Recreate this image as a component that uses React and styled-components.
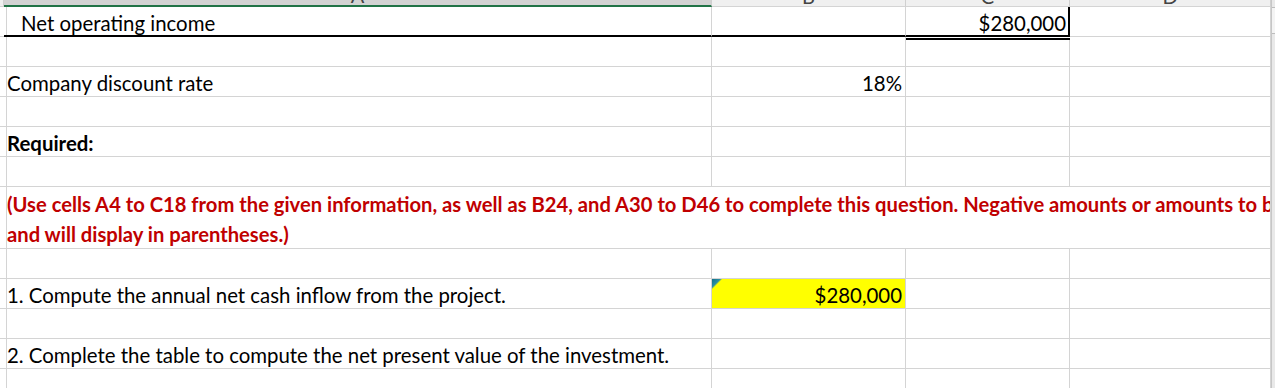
import styled, { createGlobalStyle } from "styled-components";

const GlobalStyle = createGlobalStyle`
  html, body {
    margin: 0;
    padding: 0;
    background: #fff;
    overflow: hidden;
  }
  body {
    font-family: Lato, "Liberation Sans", sans-serif;
    color: #000;
  }
`;

const COLS = "4px 708px 194px 164px 201px";
const GRID = "#d4d4d4";

const Page = styled.div`
  display: flex;
  width: 1275px;
  height: 388px;
  overflow: hidden;
`;

const Sheet = styled.div`
  width: 1271px;
  display: flex;
  flex-direction: column;
`;

const ScrollStrip = styled.div`
  width: 4px;
  background: #e9e9e9;
  border-left: 1px solid #c6c6c6;
  box-sizing: border-box;
  padding-top: 7px;
`;

const ScrollThumb = styled.div`
  height: 25px;
  border-top: 1px solid #bdbdbd;
  border-bottom: 1px solid #bdbdbd;
  background: #f4f4f4;
`;

const HeaderRow = styled.div`
  display: grid;
  grid-template-columns: ${COLS};
  height: 7px;
  flex-shrink: 0;
`;

const HeaderCell = styled.div`
  box-sizing: border-box;
  display: flex;
  justify-content: center;
  align-items: flex-end;
  overflow: hidden;
  background: ${(p) => (p.$active ? "#d3d3d3" : "#f0f0f0")};
  border-right: 1px solid #d0d0d0;
  border-bottom: ${(p) => (p.$active ? "2px solid #217346" : `1px solid ${GRID}`)};
  font-size: 20px;
  line-height: 1;
  color: #444;
`;

const Row = styled.div`
  display: grid;
  grid-template-columns: ${COLS};
  height: ${(p) => p.$h || 30}px;
  flex-shrink: 0;
`;

const Cell = styled.div`
  box-sizing: border-box;
  position: relative;
  display: flex;
  align-items: flex-end;
  justify-content: ${(p) => (p.$right ? "flex-end" : "flex-start")};
  padding: 0 3px 3px ${(p) => p.$indent || 3}px;
  border-right: 1px solid ${GRID};
  border-bottom: 1px solid ${GRID};
  font-size: 20.4px;
  line-height: 1;
  white-space: nowrap;
  font-weight: ${(p) => (p.$bold ? 700 : 400)};
`;

const TotalCell = styled(Cell)`
  border-bottom: 2px solid #000;
  padding-bottom: 2px;
`;

const DoubleTotalCell = styled(TotalCell)`
  z-index: 1;
  padding-right: 2px;
  border-right: 2px solid #000;
  box-shadow: 0 1px 0 #fff, 0 3px 0 #000;
`;

const InputCell = styled(Cell)`
  background: linear-gradient(135deg, #12708a 0, #2c8fa3 6px, #ffff00 7.5px);
`;

const NoteCell = styled.div`
  grid-column: 2 / 6;
  box-sizing: border-box;
  overflow: hidden;
  padding: 2px 0 0 3px;
  border-right: 1px solid ${GRID};
  border-bottom: 1px solid ${GRID};
  color: #c00000;
  font-weight: 700;
  font-size: 20.2px;
  line-height: 30px;
  white-space: nowrap;
`;

const Empty = () => (
  <>
    <Cell />
    <Cell />
    <Cell />
    <Cell />
    <Cell />
  </>
);

const TextRow = ({ text, value, fill, bold }) => (
  <Row>
    <Cell />
    <Cell $bold={bold}>{text}</Cell>
    {fill ? <InputCell $right>{value}</InputCell> : <Cell $right>{value}</Cell>}
    <Cell />
    <Cell />
  </Row>
);

export default function App() {
  return (
    <>
      <GlobalStyle />
      <Page>
        <Sheet>
          <HeaderRow>
            <HeaderCell />
            <HeaderCell $active>A</HeaderCell>
            <HeaderCell>B</HeaderCell>
            <HeaderCell>C</HeaderCell>
            <HeaderCell>D</HeaderCell>
          </HeaderRow>

          <Row>
            <Cell />
            <TotalCell $indent={17}>Net operating income</TotalCell>
            <TotalCell />
            <DoubleTotalCell $right>$280,000</DoubleTotalCell>
            <Cell />
          </Row>
          <Row><Empty /></Row>
          <TextRow text="Company discount rate" value="18%" />
          <Row><Empty /></Row>
          <TextRow text="Required:" bold />
          <Row><Empty /></Row>

          <Row $h={62}>
            <Cell />
            <NoteCell>
              <div>
                (Use cells A4 to C18 from the given information, as well as B24, and A30 to D46 to complete this question. Negative amounts or amounts to be deducted should be indicated with a minus sign
              </div>
              <div>and will display in parentheses.)</div>
            </NoteCell>
          </Row>

          <Row><Empty /></Row>
          <TextRow text="1. Compute the annual net cash inflow from the project." value="$280,000" fill />
          <Row><Empty /></Row>
          <TextRow text="2. Complete the table to compute the net present value of the investment." />
          <Row><Empty /></Row>
        </Sheet>
        <ScrollStrip>
          <ScrollThumb />
        </ScrollStrip>
      </Page>
    </>
  );
}
